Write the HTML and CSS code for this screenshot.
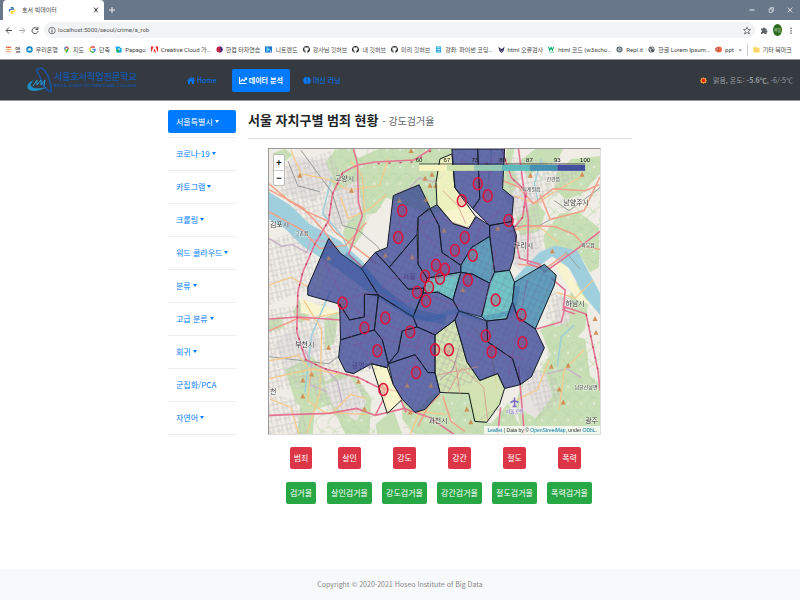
FILE: index.html
```html
<!DOCTYPE html>
<html lang="ko">
<head>
<meta charset="utf-8">
<meta name="viewport" content="width=device-width, initial-scale=1">
<title>호서 빅데이터</title>
<link rel="stylesheet" href="styles.css">
</head>
<body>
<svg class="defs" width="0" height="0" aria-hidden="true">
  <symbol id="gh" viewBox="0 0 16 16"><path fill="#24292e" d="M8 0a8 8 0 0 0-2.500 15.600c.4.1.5-.2.5-.4v-2c-2.200.5-2.700-1-2.700-1-.4-1-.9-1.200-.9-1.200-.7-.5.1-.5.1-.5.8.1 1.200.8 1.200.8.7 1.300 1.900.9 2.300.7.1-.5.3-.9.5-1.100-1.800-.2-3.600-.9-3.600-4 0-.8.3-1.600.8-2.100-.1-.2-.4-1 .1-2.100 0 0 .7-.2 2.200.8a7 7 0 0 1 4 0c1.500-1 2.200-.8 2.200-.8.5 1.100.2 1.900.1 2.100.5.6.8 1.300.8 2.100 0 3.100-1.900 3.800-3.600 4 .3.300.5.800.5 1.500v2.800c0 .2.100.5.500.4A8 8 0 0 0 8 0"/></symbol>
</svg>

<header class="browser">
  <div class="tabs">
    <div class="tab">
      <svg class="ico" viewBox="0 0 16 16" aria-hidden="true"><path fill="#3775a9" d="M8 1c-3 0-3 1-3 3h4v1H3C1 5 1 11 4 11V9q0-2 2-2h4q2 0 2-2V4c0-2-1-3-4-3"/><path fill="#ffd43b" d="M8 15c3 0 4-1 4-3H8v-1h5c3 0 3-6 0-6v2q0 2-2 2H7q-2 0-2 2v2c0 1 1 2 3 2"/></svg>
      <span class="tab-title">호서 빅데이터</span>
      <button class="plain" aria-label="탭 닫기"><svg class="x" viewBox="0 0 10 10"><path d="M2 1l6 8M8 1L2 9" stroke="#333" stroke-width="1.600"/></svg></button>
    </div>
    <button class="plain newtab" aria-label="새 탭"><svg class="x" viewBox="0 0 10 10"><path d="M5 0v10M0 5h10" stroke="#fff" stroke-width="1.500"/></svg></button>
    <div class="win">
      <button class="plain" aria-label="최소화"><svg class="x" viewBox="0 0 10 10"><path d="M1 5h8" stroke="#fff" stroke-width="1.500"/></svg></button>
      <button class="plain" aria-label="이전 크기로"><svg class="x" viewBox="0 0 10 10"><path d="M2 3h5v6H2zM4 3V1h5v6H7" fill="none" stroke="#fff"/></svg></button>
      <button class="plain" aria-label="닫기"><svg class="x" viewBox="0 0 10 10"><path d="M1 1l8 8M9 1L1 9" stroke="#fff" stroke-width="1.200"/></svg></button>
    </div>
  </div>
  <div class="toolbar">
    <button class="plain" aria-label="뒤로"><svg class="ico" viewBox="0 0 16 16"><path d="M14 8H3M8 2L2 8l6 6" fill="none" stroke="#4a4d51" stroke-width="2"/></svg></button>
    <button class="plain" aria-label="앞으로"><svg class="ico" viewBox="0 0 16 16"><path d="M2 8h11M8 2l6 6-6 6" fill="none" stroke="#a5a8ac" stroke-width="2"/></svg></button>
    <button class="plain" aria-label="새로고침"><svg class="ico" viewBox="0 0 16 16"><path d="M13 5a6 6 0 1 0 1 4M14 1v5H9" fill="none" stroke="#4a4d51" stroke-width="2"/></svg></button>
    <div class="omnibox">
      <svg class="ico" viewBox="0 0 16 16" aria-hidden="true"><circle cx="8" cy="8" r="6.500" fill="none" stroke="#555" stroke-width="1.500"/><path d="M8 7v5M8 4v2" stroke="#555" stroke-width="2"/></svg>
      <input type="text" aria-label="주소" value="localhost:5000/seoul/crime/a_rob">
      <button class="plain" aria-label="북마크 추가"><svg class="ico" viewBox="0 0 16 16"><path d="M8 1l2 5h5l-4 4 2 5-5-3-5 3 2-5-4-4h5z" fill="none" stroke="#555" stroke-width="1.500"/></svg></button>
    </div>
    <button class="plain" aria-label="확장 프로그램"><svg class="ico" viewBox="0 0 16 16"><path d="M2 4h4a2 2 0 1 1 4 0h3v4a2 2 0 1 1 0 4v3H9a2 2 0 1 0-4 0H2v-4a2 2 0 1 0 0-4z" fill="#5f6368"/></svg></button>
    <button class="plain avatar">하늘</button>
    <button class="plain" aria-label="메뉴"><svg class="ico" viewBox="0 0 16 16"><path d="M8 2v3M8 7v3M8 12v3" stroke="#5f6368" stroke-width="2.500"/></svg></button>
  </div>
  <nav class="bookmarks" aria-label="북마크">
    <a href="#"><svg class="ico" viewBox="0 0 16 16"><path d="M2 3h12" stroke="#e94235" stroke-width="3"/><path d="M2 8h12" stroke="#f5a33b" stroke-width="3"/><path d="M2 13h12" stroke="#e9a08b" stroke-width="3"/><path d="M5 0v16M11 0v16" stroke="#fff"/></svg>앱</a>
    <a href="#"><svg class="ico" viewBox="0 0 16 16"><circle cx="8" cy="8" r="5.500" fill="none" stroke="#0e82c8" stroke-width="4"/><path d="M1 9q7 3 14 0" stroke="#6bc7ed" stroke-width="2" fill="none"/></svg>우리은행</a>
    <a href="#"><svg class="ico" viewBox="0 0 16 16"><path d="M8 16Q3 10 3 6a5 5 0 0 1 10 0q0 4-5 10" fill="#34a853"/><path d="M3 6a5 5 0 0 1 5-5v5L4 9z" fill="#4285f4"/><path d="M8 1a5 5 0 0 1 5 5H8z" fill="#ea4335"/><path d="M4 9l4-3v5l-2 2z" fill="#fbbc04"/><circle cx="8" cy="6" r="2" fill="#fff"/></svg>지도</a>
    <a href="#"><svg class="ico" viewBox="0 0 16 16"><g fill="none" stroke-width="3"><path d="M13 4A6 6 0 0 0 3 5" stroke="#ea4335"/><path d="M3 5a6 6 0 0 0 0 6" stroke="#fbbc04"/><path d="M3 11a6 6 0 0 0 9 2" stroke="#34a853"/><path d="M12 13q2-2 2-5H8" stroke="#4285f4"/></g></svg>단축</a>
    <a href="#"><svg class="ico" viewBox="0 0 16 16"><path d="M1 1h9l5 5v9H4z" fill="#13a7ea"/><path d="M2 8h7v7H5z" fill="#1fb56b"/><circle cx="9" cy="7" r="2" fill="#fff"/></svg>Papago</a>
    <a href="#"><svg class="ico" viewBox="0 0 16 16"><path d="M0 1h6L0 15zM10 1h6v14zM8 6l4 9H9l-1-3H5z" fill="#ed2224"/></svg>Creative Cloud 가…</a>
    <a href="#"><svg class="ico" viewBox="0 0 16 16"><circle cx="8" cy="8" r="7" fill="#c52345"/><path d="M8 1a7 7 0 0 1 0 14q5-7 0-14" fill="#3b2d8c"/></svg>한컴 타자연습</a>
    <a href="#"><svg class="ico" viewBox="0 0 16 16"><path d="M0 1h16v14H0z" fill="#1875d1"/><path d="M4 1l8 7-9 7V9z" fill="#5dd0f5"/><path d="M12 8v6h3" fill="#fff"/></svg>니트렌드</a>
    <a href="#"><svg class="ico"><use href="#gh"/></svg>강사님 깃허브</a>
    <a href="#"><svg class="ico"><use href="#gh"/></svg>내 깃허브</a>
    <a href="#"><svg class="ico"><use href="#gh"/></svg>미리 깃허브</a>
    <a href="#"><svg class="ico" viewBox="0 0 16 16"><path d="M2 1h12v14H2z" fill="#2fa8e0"/><path d="M4 4h8M4 8h8M6 12h5" stroke="#c5ecfa" stroke-width="2"/></svg>강좌: 파이썬 코딩…</a>
    <a href="#"><svg class="ico" viewBox="0 0 16 16"><path d="M1 1l5 5h4l5-5-2 10-5 5-5-5z" fill="#2d2a57"/><path d="M5 8l3 5 3-5" stroke="#cfc8df" fill="none"/></svg>html 오류검사</a>
    <a href="#"><svg class="ico" viewBox="0 0 16 16"><path d="M1 2l3 8 3-7 3 7 3-8" fill="none" stroke="#04aa6d" stroke-width="2.500"/><path d="M2 14h12" stroke="#75cfae" stroke-width="2"/></svg>html 코드 (w3scho…</a>
    <a href="#"><svg class="ico" viewBox="0 0 16 16"><circle cx="8" cy="8" r="7" fill="#617079"/><circle cx="8" cy="8" r="3" fill="none" stroke="#fff" stroke-width="1.500"/></svg>Repl.it</a>
    <a href="#"><svg class="ico" viewBox="0 0 16 16"><circle cx="8" cy="8" r="7" fill="#4e5357"/><path d="M2 6l5 2-2 3 3 3M9 2l1 4 4 1" stroke="#fff" stroke-width="2" fill="none"/></svg>한글 Lorem Ipsum…</a>
    <a href="#"><svg class="ico" viewBox="0 0 16 16"><circle cx="9" cy="8" r="7" fill="#ed6c47"/><path d="M1 4h8v8H1z" fill="#b7331a"/><path d="M4 11V6h3v3H4" stroke="#fff" fill="none"/></svg>ppt</a>
    <a class="more" href="#">»</a>
    <a class="other" href="#"><svg class="ico" viewBox="0 0 16 16"><path d="M1 2h6l2 2h6v11H1z" fill="#fdd663"/></svg>기타 북마크</a>
  </nav>
</header>

<nav class="navbar" aria-label="주 메뉴">
  <a class="brand" href="#">
    <svg viewBox="0 0 27 28" aria-hidden="true"><path d="M10 5Q16-3 22 10q4 11 3 16-7-3-9-10Q13 7 10 5" fill="none" stroke="#17539f" stroke-width="1.600"/><path d="M9 13Q-1 18 2 23q6 5 19-2Q8 24 5 20q-1-3 4-7" fill="#1f8fc4"/><path d="M7 20l4-6v5l4-5v5l4-5-1 6" fill="none" stroke="#2c9bd0" stroke-width="1"/></svg>
    <span class="brand-name">서울호서직업전문학교<small>SEOUL HOSEO OCCUPATIONAL COLLEGE</small></span>
  </a>
  <a class="nav-link" href="#"><svg class="ico" viewBox="0 0 16 16"><path d="M0 8l8-7 3 3V2h3v4l2 2-1 1-7-6-7 6zM2 9l6-5 6 5v6h-4v-5H6v5H2z" fill="#007bff"/></svg>Home</a>
  <a class="nav-link active" href="#"><svg class="ico" viewBox="0 0 16 16"><path d="M1 1v13h14M3 10l4-4 3 3 5-6M11 3h4v4" fill="none" stroke="#fff" stroke-width="2.200"/></svg>데이터 분석</a>
  <a class="nav-link" href="#"><svg class="ico" viewBox="0 0 16 16"><path d="M7 1Q2 0 2 4-1 7 1 10q0 5 6 5zM9 1q5-1 5 3 3 3 1 6 0 5-6 5z" fill="#007bff"/><path d="M7 2h2v12H7z" fill="#0a6be0"/></svg>머신 러닝</a>
  <p class="weather"><svg class="ico" viewBox="0 0 16 16" aria-hidden="true"><path d="M8 0l2 3 4-1v4l2 2-2 3v3l-4-1-2 3-2-3-4 1v-3L0 8l2-2V2l4 1z" fill="#f4a12e"/><circle cx="8" cy="8" r="4" fill="#f21d12"/></svg><span>맑음, 온도: <b>-5.6℃</b>, -6/-5℃</span></p>
</nav>

<div class="layout">
  <aside>
    <ul class="side">
      <li><a class="current caret" href="#">서울특별시</a></li>
      <li><a class="caret" href="#">코로나-19</a></li>
      <li><a class="caret" href="#">카토그램</a></li>
      <li><a class="caret" href="#">크롤링</a></li>
      <li><a class="caret" href="#">워드 클라우드</a></li>
      <li><a class="caret" href="#">분류</a></li>
      <li><a class="caret" href="#">고급 분류</a></li>
      <li><a class="caret" href="#">회귀</a></li>
      <li><a href="#">군집화/PCA</a></li>
      <li><a class="caret" href="#">자연어</a></li>
    </ul>
  </aside>
  <main>
    <h1>서울 자치구별 범죄 현황 <small>- 강도검거율</small></h1>
    <div class="map">
      <svg class="canvas" viewBox="268 148 333 287" role="img" aria-label="서울 자치구 지도">
        <defs>
          <pattern id="streets" width="9" height="11" patternUnits="userSpaceOnUse" patternTransform="rotate(-12)"><path d="M0 2h9M0 7h6M2 0v11M6 2v9" fill="none" stroke="#bdbaba" stroke-width=".6"/></pattern>
          <pattern id="blocks" width="11" height="13" patternUnits="userSpaceOnUse" patternTransform="rotate(24)"><path d="M0 3h11M0 9h7M3 0v13M8 3v10" fill="none" stroke="#5b4a8c" stroke-width=".6" stroke-opacity=".35"/></pattern>
          <pattern id="woods" width="13" height="17" patternUnits="userSpaceOnUse"><path d="M0 4q4-4 7 1t6 2M3 17q-1-5 3-7t5-6" fill="none" stroke="#b5d2a3" stroke-width=".7"/><path d="M9 12h2v2H9z" fill="#e4eadb"/></pattern>
          <path id="peak" d="M0-3l2.500 5h-5z" fill="#d08f54"/>
        </defs>
        <path fill="#f0ede6" d="M268 148h333v287H268z"/>
        <g id="forest-shapes">
          <path id="forest" fill="#c8dfb5" d="M335 148h18l5 9 20-9h75l5 60-30 5-42-16-10 15-10 2-4 20-12 16-8-18 10-20-10-22-7 2-6-14-13-4zM272 152l12-4 8 6-8 6-12-2zM303 160l12 7-2 9-10-5zM507 148h8l-3 12 7 23-10 15-6-7zM520 160l16-12h28l-7 13-18 5-10 11zM557 173l15-15 29-3v18l-18 20-16 6-12-11zM518 205l20-4 8 12-6 17-17 8-6-12zM560 213l20-1 20 15v40l-9 5-9-15-20-9-16 3-2-16zM570 296l12-21 8 19-4 35-13 14-11-6zM541 330l20-14 13 20 12 3 5 37 10 10v49h-78l-7-30 7-23 15-7 13-20zM402 400l14 12 16-17 38-3 7 30 15 2 16-20 18 31H415l-13-15zM298 300l-6 12 8 12 8-9zM280 358l20-8 20 14 5 18 16-10 15 6 15 21-2 36h-24l-15-30-18 6-17-7zM300 403l14 10-2 22h-16zM375 425l18-15 9 25h-25zM324 308l14 5-4 30-10 8zM268 320l12-4 3 12-15 4z"/>
          <path fill="url(#woods)" d="M335 148h110v64l-60-10-22 25zM540 175l61-18v110l-55-30zM540 330l61 10v95h-80l20-50zM280 360l60 5 35 35v35h-55zM402 400h115v35H402z"/>
        </g>
        <path fill="#e5e2df" d="M290 155l34 5 8 16-18 25-31-8zM329 193l29-13 4 30-25 19-15-13zM273 345l20-18 24 10 2 14-34 19zM504 196l24-10 8 15-17 15zM513 238l20-6 13 20-21 20-12-8zM324 385l25-8 17 25-10 20-24-16zM527 365l20 10 6 22-17 22-17-10zM557 295l15 4-2 22-15 6z"/>
        <path fill="url(#streets)" d="M270 170l60-20 12 30 20-10 5 38-30 27-35-15-20-25zM268 240l30-10 18 30-10 30-38 15zM268 310l55-9 16 30v45l25 10 1 25-25 8-35-31-37 4zM268 395l30 5 10 35h-40zM505 155l80 10-20 23-26 17 6 38-30 25zM520 365l35 10 10 22-26 22zM553 290l23 10-8 28-22-10z"/>
        <path fill="#f7f4cf" d="M300 299l38 12-12 6-26-4zM315 275l10-13-6 30-9-2zM555 260l12 5 15 28 10 12-14-5-19-28z"/>
        <path fill="#9fcfdc" d="M268 191l22 14 18 18 31 17 23 21 18 24 31 23 36 8-3 9-37-9-42-26-29-22-35-23-18-18-15-8zM515 278l25-26 16-7 22 5 23 43v22l-15-18-16-29-17-12-20 15-18 13z"/>
        <path fill="none" stroke="#9ccfd9" stroke-width="1.500" d="M331 176l-9 37 20 23 12 29M542 158l-7 25 4 20M330 290l-19 45-7 58M575 325l-13 12-4 30M492 148l-3 30"/>
        <g fill="none" stroke="#c5b0c8" stroke-width="1.400"><path d="M268 238l13 8 10-2 15 8 4-13 15 2M396 193l13-5 10-11 14 4 12-8M304 350l7 15-2 20 17 7M325 369l12 13 5 23M480 420l18-12M508 193l11 5M548 374l20-5 14 9"/></g>
        <g fill="none" stroke="#979b98" stroke-width="1"><path d="M300 149l16 22 15 20 11 34 15 4 19 16 18 22M268 357l60 7 11-8M287 160l10 25 22 6M510 226l30-1 15-8M555 200l15 10 31-23M566 251l15 18"/></g>
        <g fill="none" stroke="#f7c887" stroke-width="1.200"><path d="M268 361l30-5 12 15-3 30 17 12 42 2M303 300l18 30-2 64-13 40M290 149l10 24 30 6 17 10 32-4 9-27M340 196l8 22 20-9 18-15M268 379l44-10 27 6M301 320l46-9M550 360l-12 30-20 10M515 195l22 8 20-13 25-14M510 230l31-3 18 15M557 292l19 6 18-18M410 435l10-23 25 3M474 329l16 15 7 44M350 160l12 15 2 36M268 285l22-8 18 10M270 400l20 8 8 27M330 415l20-20 16 4M585 350l-20 20-5 40"/></g>
        <g fill="none" stroke="#f2a088" stroke-width="1.500"><path d="M268 183l20 17 16 10 22 10 8 11 42 32M268 211l34 19 17 18 26-3 21-23M268 189l34 18 22 24 15 22M268 331l30-13 11 2M503 180l16 6 15 17 20-15 32 2 14-6M509 232l16-7 31 1 19 8 11 12 15 3M541 194l10 25 34-9 16-34M519 264l29 3 19-14M440 395l-12 12-10 20M443 397l8 25 14 10"/></g>
        <g fill="none" stroke="#e47491" stroke-width="1.600"><path d="M353 148l4 15 1 39 4 13-14 39 14 13M431 148l-17 11-39 2-18 3-15 8-10 21-4 27-14 24-12 28-5 20-1 40 9 28 19 9 34 9 18 9 21 5 9 21M268 319l30-2 42 3M268 416l26-1 35-1 27-5 19 7 29-7 25 9 25 17M502 148l10 29 15 14-4 26-9 11 6 30 20 6 5 8 31-22 25-19M519 148l6 45 4 26-1 44 20 8M537 329l25-7 4-15 21 7 12 57 2 20M501 408l-3 27M519 367l6 68M552 278l14 12-2 20 12 4M375 416l10-20-4-14"/></g>
        <path fill="none" stroke="#bc4063" stroke-width="1.300" stroke-dasharray="2 9" d="M342 172l-10 21-4 27-14 24-12 28-5 20-1 40 9 28 19 9 34 9 18 9M431 150l-17 11-39 2M502 148l10 29 15 14-4 26-9 11 6 30M587 314l12 57"/>
        <g><use href="#peak" x="299" y="175"/><use href="#peak" x="351" y="190"/><use href="#peak" x="411" y="150"/><use href="#peak" x="425" y="178"/><use href="#peak" x="432" y="174"/><use href="#peak" x="430" y="185"/><use href="#peak" x="436" y="185"/><use href="#peak" x="487" y="163"/><use href="#peak" x="553" y="251"/><use href="#peak" x="531" y="175"/><use href="#peak" x="302" y="381"/><use href="#peak" x="311" y="375"/><use href="#peak" x="302" y="397"/><use href="#peak" x="328" y="348"/><use href="#peak" x="358" y="382"/><use href="#peak" x="364" y="410"/><use href="#peak" x="552" y="367"/><use href="#peak" x="569" y="366"/><use href="#peak" x="560" y="390"/><use href="#peak" x="564" y="403"/><use href="#peak" x="596" y="319"/><use href="#peak" x="597" y="333"/><use href="#peak" x="471" y="423"/><use href="#peak" x="410" y="413"/><use href="#peak" x="583" y="174"/><use href="#peak" x="467" y="410"/></g>

        <g class="districts">
          <path class="d100" d="M393 195L419 184L430 207L418 217L417 234L389 267L375 252L387 247Z"/>
          <path class="d100" d="M328 238L340 253L361 268L378 295L364 294V317L349 320L339 304L307 295V287Z"/>
          <path class="d100" d="M361 268L375 252L389 267L408 289L424 288L413 317L378 295Z"/>
          <path class="d100" d="M389 267L417 234L418 264L427 278L424 288L408 289Z"/>
          <path class="d100" d="M418 217L430 208L439 225L442 252L461 265V272L427 278L418 264Z"/>
          <path class="d87" d="M427 278L461 272L453 300L438 292L423 293Z"/>
          <path class="d100" d="M430 208L437 204L453 223L469 228L476 216L490 225V236L472 247L461 265L442 252L439 225Z"/>
          <path class="d67" d="M440 158L452 153L455 187L476 216L469 228L453 223L437 204L436 182Z"/>
          <path class="d100" d="M452 148H478L480 198L473 208L455 187Z"/>
          <path class="d100" d="M478 148H505L503 188L514 197L512 221L490 225L473 208L480 198Z"/>
          <path class="d100" d="M490 225L512 221L517 235L514 258L510 270L495 272L490 236Z"/>
          <path class="d93" d="M490 236L472 247L461 265V272L473 274L490 283L495 272Z"/>
          <path class="d100" d="M461 272L473 274L490 283L482 317L459 311L453 300Z"/>
          <path class="d87" d="M495 272L510 270L515 282L513 302L507 319L487 321L482 317L490 283Z"/>
          <path class="d93" d="M515 282L545 264L557 275L555 285L536 329L518 317L513 302Z"/>
          <path class="d100" d="M487 321L507 319L513 302L518 317L536 329L545 348L532 377L521 385L513 359L488 342Z"/>
          <path class="d100" d="M459 311L487 321L488 342L513 359L521 385L505 389L498 374L480 381L467 362L455 320Z"/>
          <path class="d73" d="M455 320L467 362L480 381L498 374L505 389L500 405L487 423L475 422L469 394L440 393L435 373V335Z"/>
          <path class="d100" d="M423 293L438 292L453 300L459 311L455 320L435 335L417 327L413 317Z"/>
          <path class="d100" d="M417 327L435 335V373H428L415 355L388 364L398 352L402 331Z"/>
          <path class="d100" d="M388 364L415 355L428 373H435L440 393L425 410L415 413L402 400L393 385Z"/>
          <path class="d67" d="M371 364L387 368L393 385L402 400L387 414Z"/>
          <path class="d100" d="M378 295L413 317L417 327L402 331L398 352L388 364L382 340L374 330Z"/>
          <path class="d100" d="M339 304L349 320L364 317V294L378 295L374 330L340 340Z"/>
          <path class="d100" d="M340 340L374 330L382 340L388 364L387 368L371 364L353 374L345 372L338 358Z"/>
        </g>
        <path fill="url(#blocks)" d="M328 238L361 268L375 252L387 247L393 195L419 184L430 207L437 204L453 223L469 228L476 216L455 187L452 148H505L503 188L514 197L517 235L510 270L515 282L545 264L557 275L536 329L545 348L532 377L505 389L498 374L480 381L440 393L425 410L415 413L387 368L353 374L338 358L339 304L307 295Z"/>
        <path fill="none" stroke="#2e5fa8" stroke-opacity=".3" stroke-width="5" stroke-linejoin="round" d="M345 253q22 20 38 37t30 26q14 6 25 1t21-6q15 8 26 7t27-6q5-12 6-26"/>
        <g fill="none" stroke="#8c4c97" stroke-opacity=".5"><path d="M323 259l18 36 22 22 43 15M397 206l7 45 19 12 14-9 27 7M380 289l15-12 34 2 33-5M342 300l31-8 28 9 30-4 31 9M352 346l27-8 39 10 21-20M395 379l17-14 23-1M466 332l22 18 34-14M492 156l-3 32-13 23M420 224l20-7 27 10 18-10M496 250l-6 37-9 27M460 345l-7 25-13 10M528 280l-10 50-9 45M460 160l18 12 24-3M345 330l20 22 6 12M400 395l15-30 4-30M475 365l15-15 35 10M395 240l22-15 18 20M500 210l-20 18-5 22"/></g>
        <path fill="none" stroke="#d98b86" stroke-opacity=".7" d="M436 345l20 20 4 30M448 393l14-25 22 20 4 33M439 375l40-8M443 190l15 15 8 18"/>
        <g fill="#604d8b" opacity=".65"><use href="#peak" x="426" y="199"/><use href="#peak" x="399" y="200"/><use href="#peak" x="385" y="255"/><use href="#peak" x="498" y="228"/><use href="#peak" x="328" y="258"/><use href="#peak" x="412" y="257"/><use href="#peak" x="444" y="230"/><use href="#peak" x="407" y="386"/><use href="#peak" x="431" y="386"/><use href="#peak" x="463" y="290"/></g>

        <g class="labels">
          <text x="344" y="180">고양시</text><text class="from-left" x="269" y="226">김포시</text><text class="town" x="301" y="235">고촌읍</text><text x="304" y="347">부천시</text><text x="524" y="248">구리시</text><text class="town" x="532" y="190">퇴계원읍</text><text class="town" x="554" y="180">진건읍</text><text x="577" y="204">남양주시</text><text class="town" x="589" y="247">와부읍</text><text x="576" y="306">하남시</text><text class="town" x="587" y="389">남한산성면</text><text x="438" y="424">과천시</text><text class="to-right" x="599" y="424">광주</text><text class="seoul" x="409" y="279">서울</text><text class="seoul" x="361" y="368">광명시</text><text class="town airport" x="515" y="414">서울공항</text><text class="from-left" x="269" y="394">천</text>
        </g>
        <path d="M515 398v9M511 403l4-2 4 2M513 407h4" stroke="#7d6ac5" stroke-width="1.500" fill="none"/>
        <g class="marks">
          <ellipse cx="402" cy="210" rx="4.500" ry="6"/><ellipse cx="398" cy="237" rx="4.500" ry="6"/><ellipse cx="478" cy="183" rx="4.500" ry="6"/><ellipse cx="488" cy="195" rx="4.500" ry="6"/><ellipse cx="462" cy="200" rx="4.500" ry="6"/><ellipse cx="509" cy="220" rx="4.500" ry="6"/><ellipse cx="465" cy="237" rx="4.500" ry="6"/><ellipse cx="455" cy="250" rx="4.500" ry="6"/><ellipse cx="473" cy="255" rx="4.500" ry="6"/><ellipse cx="436" cy="265" rx="4.500" ry="6"/><ellipse cx="445" cy="269" rx="4.500" ry="6"/><ellipse cx="440" cy="278" rx="4.500" ry="6"/><ellipse cx="425" cy="276" rx="4.500" ry="6"/><ellipse cx="429" cy="287" rx="4.500" ry="6"/><ellipse cx="417" cy="292" rx="4.500" ry="6"/><ellipse cx="426" cy="301" rx="4.500" ry="6"/><ellipse cx="468" cy="280" rx="4.500" ry="6"/><ellipse cx="496" cy="300" rx="4.500" ry="6"/><ellipse cx="522" cy="315" rx="4.500" ry="6"/><ellipse cx="523" cy="343" rx="4.500" ry="6"/><ellipse cx="486" cy="336" rx="4.500" ry="6"/><ellipse cx="492" cy="352" rx="4.500" ry="6"/><ellipse cx="449" cy="350" rx="4.500" ry="6"/><ellipse cx="435" cy="350" rx="4.500" ry="6"/><ellipse cx="410" cy="332" rx="4.500" ry="6"/><ellipse cx="385" cy="318" rx="4.500" ry="6"/><ellipse cx="364" cy="328" rx="4.500" ry="6"/><ellipse cx="342" cy="303" rx="4.500" ry="6"/><ellipse cx="377" cy="351" rx="4.500" ry="6"/><ellipse cx="416" cy="373" rx="4.500" ry="6"/><ellipse cx="383" cy="390" rx="4.500" ry="6"/>
        </g>
        <g class="legend">
          <path fill="#f7f5bf" d="M419 164h28v6h-28z"/><path fill="#cce0aa" d="M447 164h28v6h-28z"/><path fill="#95c9b4" d="M475 164h28v6h-28z"/><path fill="#5dbabc" d="M503 164h27v6h-27z"/><path fill="#4390b0" d="M530 164h28v6h-28z"/><path fill="#42509f" d="M558 164h28v6h-28z"/>
          <path d="M419 163h167" stroke="#222" stroke-width=".7"/>
          <text x="419" y="161">60</text><text x="447" y="161">67</text><text x="475" y="161">73</text><text x="503" y="161">80</text><text x="530" y="161">87</text><text x="558" y="161">93</text><text x="586" y="161">100</text>
        </g>
      </svg>
      <div class="zoom"><button aria-label="확대">+</button><button aria-label="축소">−</button></div>
      <p class="credit"><a href="#">Leaflet</a> | Data by © <a href="#">OpenStreetMap</a>, under <a href="#">ODbL</a>.</p>
    </div>
    <div class="choices">
      <button class="red">범죄</button><button class="red">살인</button><button class="red">강도</button><button class="red">강간</button><button class="red">절도</button><button class="red">폭력</button>
      <button class="green">검거율</button><button class="green">살인검거율</button><button class="green">강도검거율</button><button class="green">강간검거율</button><button class="green">절도검거율</button><button class="green">폭력검거율</button>
    </div>
  </main>
</div>
<footer>Copyright © 2020-2021 Hoseo Institute of Big Data</footer>
</body>
</html>
```
FILE: styles.css
```css
* { box-sizing: border-box; }
body {
  margin: 0;
  min-height: 100vh;
  display: flex;
  flex-direction: column;
  background: #fff;
  color: #212529;
  font: 8px/12px "Noto Sans CJK KR", sans-serif;
}
a { color: #007bff; text-decoration: none; }
button, input { font: inherit; color: inherit; }
p, h1, ul { margin: 0; padding: 0; }
.defs { position: absolute; }
.ico { width: 8px; height: 9px; flex: none; }
.x { width: 6px; height: 8px; display: block; }
.plain { border: 0; padding: 0; background: none; display: flex; align-items: center; }

.tabs { display: flex; align-items: center; height: 20px; background: #68778a; padding-left: 3px; }
.tab { display: flex; align-items: center; gap: 6px; width: 101px; height: 20px; padding: 0 5px; background: #fff; border-radius: 4px 4px 0 0; font-size: 6px; color: #444; }
.tab-title { flex: 1; }
.newtab { margin-left: 5px; }
.win { display: flex; gap: 13px; margin-left: auto; padding-right: 7px; }
.toolbar { display: flex; align-items: center; gap: 5px; height: 20px; padding: 0 5px; }
.omnibox { flex: 1; display: flex; align-items: center; gap: 2px; height: 16px; padding: 0 4px; background: #f1f3f4; border-radius: 8px; }
.omnibox input { flex: 1; min-width: 0; border: 0; padding: 0; background: none; outline: 0; color: #555; font: 6px/12px Roboto, sans-serif; }
.avatar { width: 9px; height: 12px; justify-content: center; border-radius: 50%; background: #2c6a1d; color: #dce8d8; font-size: 4px; }
.bookmarks { display: flex; align-items: center; justify-content: space-between; height: 19px; padding: 0 8px 0 5px; font: 6px/12px Roboto, "Noto Sans CJK KR", sans-serif; white-space: nowrap; }
.bookmarks a { display: flex; align-items: center; gap: 3px; color: #444; }
.bookmarks .ico { width: 7px; }
.bookmarks .other { border-left: 1px solid #ccc; padding-left: 5px; }

.navbar { display: flex; align-items: center; height: 42px; padding: 0 7px 0 26px; background: #343a40; border: solid #929497; border-width: 1px 0; }
.brand { display: flex; align-items: center; gap: 1px; width: 154px; color: #17539f; font-weight: 700; font-size: 9px; white-space: nowrap; }
.brand svg { width: 27px; height: 28px; flex: none; }
.brand small { display: block; font: 700 4px/6px "Liberation Sans", sans-serif; }
.nav-link { display: flex; align-items: center; gap: 2px; height: 23px; padding: 0 7px; border-radius: 2px; font-size: 7px; white-space: nowrap; }
.nav-link.active { background: #007bff; color: #fff; font-weight: 700; margin: 0 6px 0 8px; }
.weather { display: flex; align-items: center; gap: 6px; margin-left: auto; color: #9a9da0; font-size: 7px; white-space: nowrap; }
.weather .ico { width: 7px; }

.layout { flex: 1; width: 58%; margin: 0 auto; padding-top: 9px; display: grid; grid-template-columns: 68px minmax(0, 1fr); column-gap: 12px; }
.side { list-style: none; }
.side li { height: 33px; border-bottom: 1px solid #ececec; display: flex; align-items: center; }
.side li:first-child { height: 28px; align-items: flex-start; }
.side a { flex: 1; padding: 0 8px; white-space: nowrap; }
.side .current { line-height: 23px; color: #fff; background: #007bff; border-radius: 2px; }
.caret::after { content: ""; display: inline-block; margin-left: 2px; vertical-align: 2px; border: solid transparent; border-width: 3px 2px 0; border-top-color: currentColor; }

h1 { font-size: 13px; line-height: 20px; height: 29px; border-bottom: 1px solid #ddd; font-weight: 700; }
h1 small { font-size: 10px; font-weight: 400; color: #5f666c; }
.map { position: relative; margin: 9px 31px 0 20px; border: 1px solid #999; border-right-color: #ddd; border-bottom-color: #ddd; font-family: "Liberation Sans", "Noto Sans CJK KR", sans-serif; }
.canvas { display: block; width: 100%; height: auto; }
.districts path { stroke: #101820; stroke-width: 1; fill-opacity: .72; }
.districts .d100 { fill: #2b3b92; }
.districts .d93 { fill: #287fa8; }
.districts .d87 { fill: #41b6b7; }
.districts .d73 { fill: #c7dfa0; }
.districts .d67 { fill: #fbf8c2; }
.marks ellipse { fill: #dc143c; fill-opacity: .2; stroke: #dc143c; stroke-width: 1.500; }
.labels text { font: 7px "Noto Sans CJK KR", sans-serif; text-anchor: middle; fill: #333; stroke: #fff; stroke-width: 1; stroke-opacity: .6; paint-order: stroke; }
.labels .town { font-size: 5px; }
.labels .from-left { text-anchor: start; }
.labels .to-right { text-anchor: end; }
.labels .seoul { fill: #4b4187; stroke: none; }
.labels .airport { fill: #7260b8; }
.legend text { font: 6px "Liberation Sans", sans-serif; text-anchor: middle; fill: #111; }
.zoom { position: absolute; left: 4px; top: 5px; display: grid; width: 12px; border: 1px solid #bbb; border-radius: 2px; background: #fff; }
.zoom button { height: 15px; padding: 0; border: 0; background: none; color: #000; font: 700 9px/14px "Liberation Sans", sans-serif; }
.zoom button + button { border-top: 1px solid #ccc; }
.credit { position: absolute; right: 0; bottom: 0; padding: 0 3px; background: rgba(255, 255, 255, .75); font-size: 5px; line-height: 8px; color: #333; }
.credit a { color: #0078a8; }

.choices { display: grid; grid-template-columns: 42px repeat(5, 55px); gap: 13px 0; justify-items: center; margin: 12px 0 0 32px; }
.choices button { height: 22px; padding: 0 4px; border: 0; border-radius: 2px; color: #fff; white-space: nowrap; }
.choices .red { background: #dc3545; }
.choices .green { background: #28a745; }
footer { margin-top: 20px; height: 31px; line-height: 31px; text-align: center; background: #f8f9fa; color: #888; font-size: 7px; }
```
